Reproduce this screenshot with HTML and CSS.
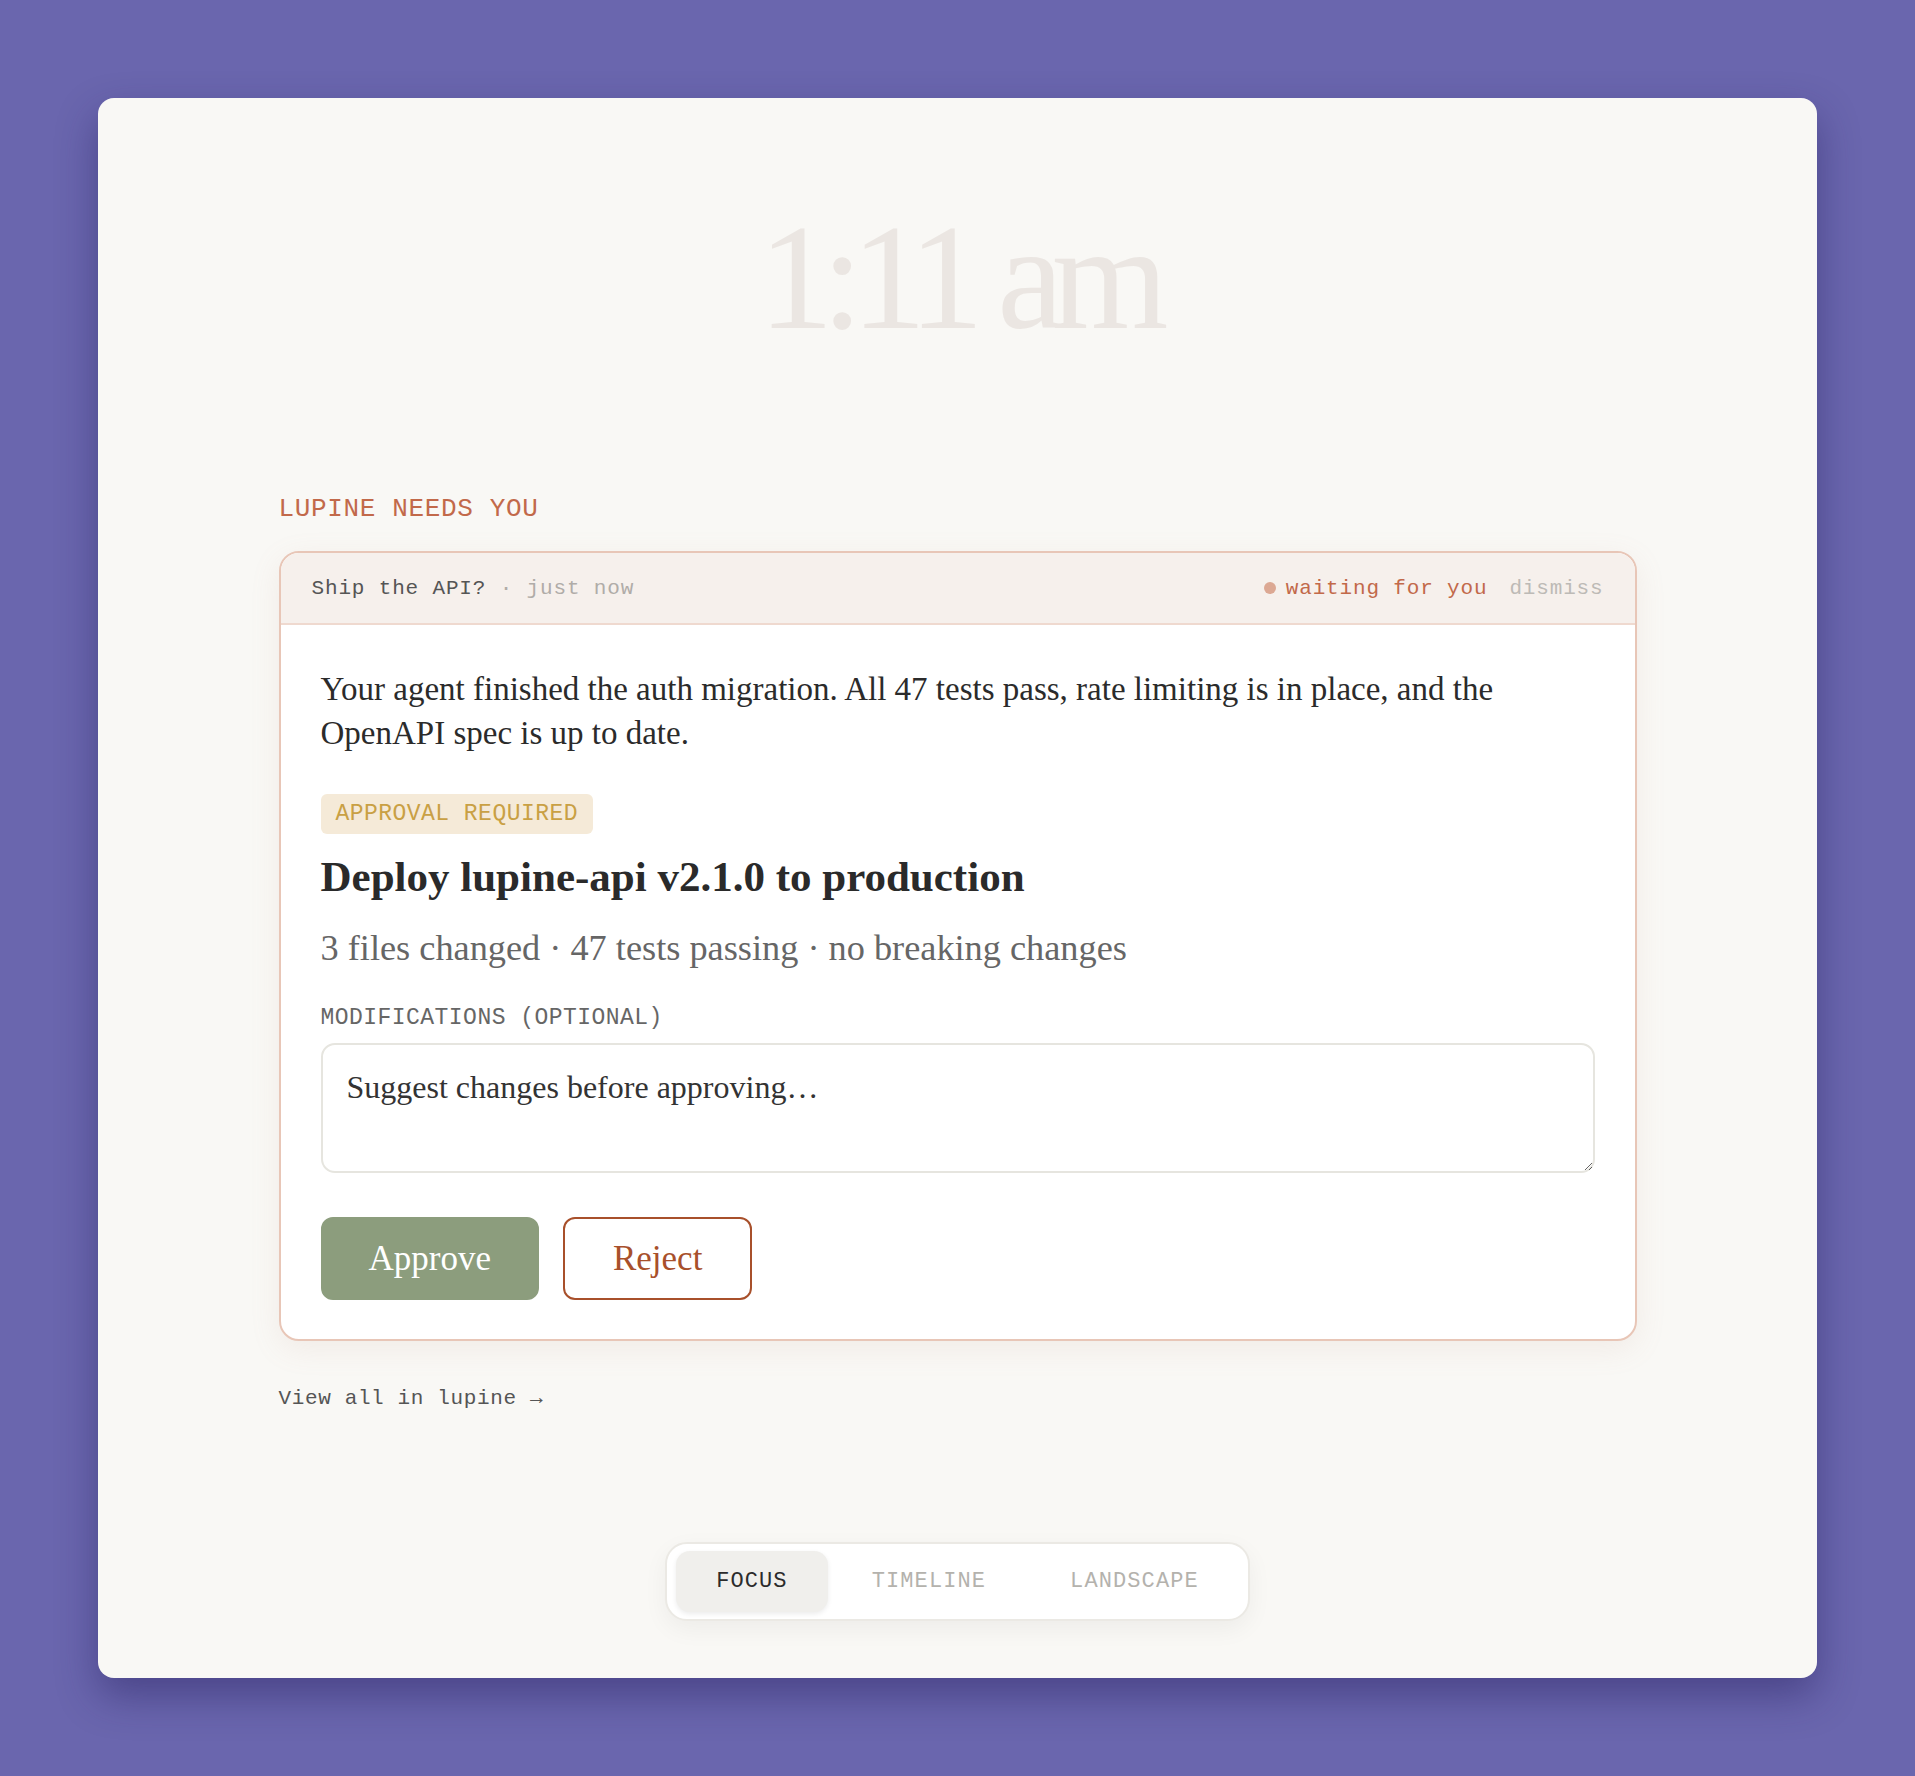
FILE: index.html
```html
<!DOCTYPE html>
<html lang="en">

<head>
    <meta charset="UTF-8">
    <meta name="viewport" content="width=device-width, initial-scale=1.0">
    <title>Lupine — Focus</title>
    <link rel="stylesheet" href="styles.css">
</head>

<body>
    <div class="screen">
        <div class="clock">1:11 am</div>

        <main class="column">
            <h2 class="section-label">LUPINE NEEDS YOU</h2>

            <section class="request">
                <header class="request-head">
                    <div class="request-title">
                        Ship the API? <span class="muted">· just now</span>
                    </div>
                    <div class="request-status">
                        <span class="status-dot"></span>
                        <span class="status-text">waiting for you</span>
                        <a href="#" class="dismiss">dismiss</a>
                    </div>
                </header>

                <div class="request-body">
                    <p class="summary">Your agent finished the auth migration. All 47 tests pass, rate limiting is in
                        place, and the OpenAPI spec is up to date.</p>

                    <span class="badge">APPROVAL REQUIRED</span>
                    <h3 class="action-title">Deploy lupine-api v2.1.0 to production</h3>
                    <p class="action-meta">3 files changed · 47 tests passing · no breaking changes</p>

                    <label class="field-label" for="mods">MODIFICATIONS (OPTIONAL)</label>
                    <textarea id="mods" class="mods" placeholder="Suggest changes before approving…"></textarea>

                    <div class="actions">
                        <button class="btn btn-approve">Approve</button>
                        <button class="btn btn-reject">Reject</button>
                    </div>
                </div>
            </section>

            <a href="#" class="view-all">View all in lupine →</a>
        </main>

        <nav class="tabs">
            <a href="#" class="tab active">FOCUS</a>
            <a href="#" class="tab">TIMELINE</a>
            <a href="#" class="tab">LANDSCAPE</a>
        </nav>
    </div>
</body>

</html>
```

FILE: styles.css
```css
body {
    margin: 0;
    padding: 98px;
    background: #6a66ae;
    font-family: "Liberation Serif", "DejaVu Serif", serif;
    color: #2b2b2b;
}

/* the big light card */
.screen {
    height: 1580px;
    box-sizing: border-box;
    background: #f9f8f5;
    border-radius: 16px;
    box-shadow: 0 18px 40px rgba(35, 28, 90, 0.45);
    display: flex;
    flex-direction: column;
    align-items: center;
    padding-bottom: 57px;
}

.clock {
    margin-top: 104px;
    font-size: 150px;
    line-height: 150px;
    letter-spacing: -0.08em;
    color: #ebe6e2;
}

.column {
    width: 1358px;
    margin-top: 142px;
}

.section-label {
    margin: 0 0 26px;
    font-family: "Liberation Mono", monospace;
    font-size: 26px;
    line-height: 31px;
    font-weight: normal;
    letter-spacing: 0.025em;
    color: #c2694a;
}

/* request card */
.request {
    border: 2px solid #e8c6b7;
    border-radius: 20px;
    background: #fff;
    overflow: hidden;
    box-shadow: 0 8px 30px rgba(190, 150, 130, 0.12);
}

.request-head {
    height: 70px;
    display: flex;
    align-items: center;
    justify-content: space-between;
    padding: 0 31px;
    background: #f6f0ec;
    border-bottom: 2px solid #efd9cf;
    font-family: "Liberation Mono", monospace;
    font-size: 21px;
    letter-spacing: 0.04em;
    color: #555;
}

.muted {
    color: #b0aca8;
}

.request-status {
    display: flex;
    align-items: center;
}

.status-dot {
    width: 12px;
    height: 12px;
    border-radius: 50%;
    background: #dca893;
    margin-right: 10px;
}

.status-text {
    color: #c2694a;
}

.dismiss {
    margin-left: 22px;
    color: #bdbab6;
    text-decoration: none;
}

.request-body {
    padding: 42px 40px 39px;
}

.summary {
    margin: 0;
    font-size: 33px;
    line-height: 44px;
    color: #2b2b2b;
}

.badge {
    display: inline-block;
    margin-top: 39px;
    padding: 6px 15px;
    border-radius: 6px;
    background: #f5ead8;
    font-family: "Liberation Mono", monospace;
    font-size: 23px;
    line-height: 28px;
    letter-spacing: 0.02em;
    color: #c9a044;
}

.action-title {
    margin: 17px 0 0;
    font-size: 43px;
    line-height: 52px;
    font-weight: bold;
    color: #2a2a2a;
}

.action-meta {
    margin: 22px 0 0;
    font-size: 36.3px;
    line-height: 46px;
    color: #666;
}

.field-label {
    display: block;
    margin-top: 33px;
    font-family: "Liberation Mono", monospace;
    font-size: 23px;
    line-height: 28px;
    letter-spacing: 0.02em;
    color: #666;
}

.mods {
    display: block;
    box-sizing: border-box;
    width: 100%;
    height: 130px;
    margin-top: 11px;
    padding: 20px 24px;
    border: 2px solid #e6e5df;
    border-radius: 14px;
    font-family: "Liberation Serif", "DejaVu Serif", serif;
    font-size: 32px;
    line-height: 44px;
    color: #2b2b2b;
    resize: vertical;
    outline: none;
}

.mods::placeholder {
    color: #333;
    opacity: 1;
}

.actions {
    display: flex;
    gap: 24px;
    margin-top: 44px;
}

.btn {
    height: 83px;
    padding: 0 46px;
    border-radius: 12px;
    border: 2px solid transparent;
    font-family: "Liberation Serif", "DejaVu Serif", serif;
    font-size: 35px;
    cursor: pointer;
}

.btn-approve {
    background: #8c9d7d;
    border-color: #8c9d7d;
    color: #fff;
}

.btn-reject {
    background: #fff;
    border-color: #a8502b;
    color: #a8502b;
    padding: 0 48px;
}

.view-all {
    display: inline-block;
    margin-top: 44px;
    font-family: "Liberation Mono", monospace;
    font-size: 21px;
    line-height: 28px;
    letter-spacing: 0.03em;
    color: #555;
    text-decoration: none;
}

/* bottom view switcher */
.tabs {
    margin-top: auto;
    display: flex;
    gap: 4px;
    padding: 7px 9px;
    background: #fff;
    border: 2px solid #ebe9e4;
    border-radius: 22px;
    box-shadow: 0 8px 24px rgba(0, 0, 0, 0.05);
}

.tab {
    height: 61px;
    display: flex;
    align-items: center;
    padding: 0 40px;
    border-radius: 14px;
    font-family: "Liberation Mono", monospace;
    font-size: 22px;
    letter-spacing: 0.05em;
    color: #b4b2ad;
    text-decoration: none;
}

.tab.active {
    background: #f0efec;
    color: #2b2b2b;
    box-shadow: 0 2px 5px rgba(0, 0, 0, 0.08);
}
```
